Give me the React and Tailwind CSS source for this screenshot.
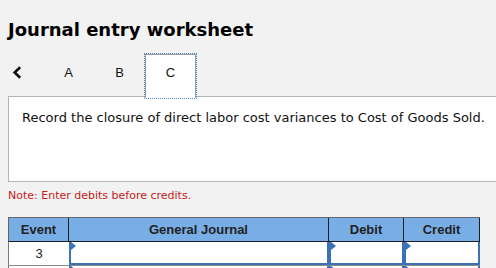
import React from "react";

function Marker() {
  return (
    <span className="absolute left-0 top-0 w-0 h-0 border-t-[4px] border-b-[4px] border-l-[5px] border-t-transparent border-b-transparent border-l-[#3a72b8]" />
  );
}

function InputCell({ w }) {
  return (
    <div className={`${w} relative h-full bg-white border-x-2 border-b-2 border-[#3b71b6]`}>
      <Marker />
    </div>
  );
}

function EntryRow({ event }) {
  return (
    <div className="flex h-[24px] border-b border-[#8a8a8a]">
      <div className="w-[61px] h-full bg-white border-l border-[#777] flex items-center justify-center text-[13px] text-[#222] font-['Liberation_Sans',sans-serif]">
        {event}
      </div>
      <InputCell w="w-[260px]" />
      <InputCell w="w-[75px]" />
      <InputCell w="w-[76px]" />
    </div>
  );
}

export default function App() {
  const tabs = ["A", "B", "C"];
  const active = "C";

  return (
    <div className="w-[496px] h-[268px] overflow-hidden bg-[#f2f2f2] font-['DejaVu_Sans',sans-serif]">
      <h1 className="pl-2 pt-[19px] text-[18px] leading-[22px] font-bold text-black">Journal entry worksheet</h1>

      {/* tab strip */}
      <div className="flex items-end h-[42px] mt-[13px] relative z-10">
        <div className="w-[43px] h-full pl-[12px] pt-[12px]">
          <svg width="10" height="13" viewBox="0 0 10 13" className="block">
            <path d="M8.2 1.2 L2.6 6.5 L8.2 11.8" fill="none" stroke="#111" strokeWidth="2.6" />
          </svg>
        </div>
        {tabs.map((t) =>
          t === active ? (
            <div
              key={t}
              className="w-[51px] h-[44px] -mb-[2px] bg-white border border-[#999] border-b-0 outline-1 outline-dotted outline-[#4a86d0] flex items-start justify-center pt-[10px] text-[13px] leading-[15px] text-[#111] font-['Liberation_Sans',sans-serif]"
            >
              {t}
            </div>
          ) : (
            <div key={t} className="w-[51px] h-full flex items-start justify-center pt-[11px] text-[13px] leading-[15px] text-[#111] font-['Liberation_Sans',sans-serif]">
              {t}
            </div>
          )
        )}
      </div>

      {/* question box */}
      <div className="ml-2 w-[500px] h-[86px] bg-white border border-[#b4b4b4] pl-[13px] pt-[13px]">
        <p className="text-[13px] leading-[16px] text-[#111]">
          Record the closure of direct labor cost variances to Cost of Goods Sold.
        </p>
      </div>

      <p className="pl-2 mt-[7px] text-[11px] leading-[14px] text-[#c41a1a]">Note: Enter debits before credits.</p>

      {/* journal table */}
      <div className="ml-2 mt-[14px] w-[472px] font-['Liberation_Sans',sans-serif]">
        <div className="flex h-[25px] bg-[#79ade5] border-t border-l border-[#666] border-b border-b-[#1d1d1d] text-[13px] font-bold text-[#222]">
          <div className="w-[60px] flex items-center justify-center border-r border-[#1d1d1d]">Event</div>
          <div className="w-[260px] flex items-center justify-center border-r border-[#1d1d1d]">General Journal</div>
          <div className="w-[75px] flex items-center justify-center border-r border-[#1d1d1d]">Debit</div>
          <div className="w-[76px] flex items-center justify-center border-r border-[#1d1d1d]">Credit</div>
        </div>
        <EntryRow event="3" />
        <EntryRow event="" />
      </div>
    </div>
  );
}
